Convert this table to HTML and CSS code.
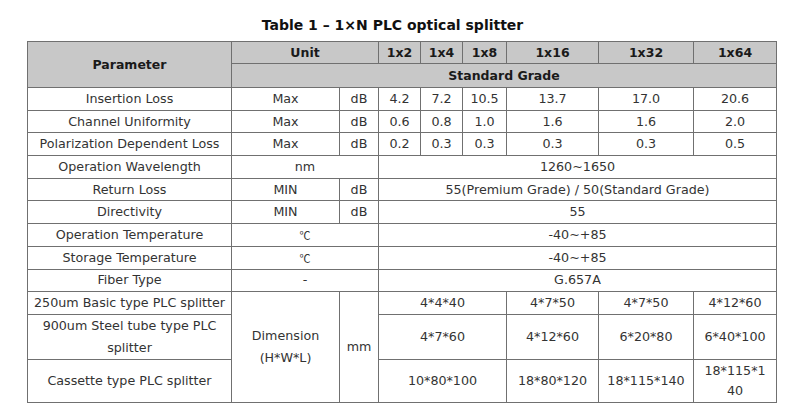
FILE: index.html
```html
<!DOCTYPE html>
<html>
<head>
<meta charset="utf-8">
<link rel="stylesheet" href="styles.css">
</head>
<body>
<div class="page">
  <h1 class="title">Table 1 – 1×N PLC optical splitter</h1>
  <table class="spec">
    <colgroup>
      <col class="c-param">
      <col class="c-unit">
      <col class="c-db">
      <col class="c-x2">
      <col class="c-x4">
      <col class="c-x8">
      <col class="c-x16">
      <col class="c-x32">
      <col class="c-x64">
    </colgroup>
    <tr class="hrow1">
      <th rowspan="2">Parameter</th>
      <th colspan="2">Unit</th>
      <th>1x2</th><th>1x4</th><th>1x8</th><th>1x16</th><th>1x32</th><th>1x64</th>
    </tr>
    <tr class="hrow2">
      <th colspan="8">Standard Grade</th>
    </tr>
    <tr class="r">
      <td>Insertion Loss</td><td>Max</td><td>dB</td>
      <td>4.2</td><td>7.2</td><td>10.5</td><td>13.7</td><td>17.0</td><td>20.6</td>
    </tr>
    <tr class="r">
      <td>Channel Uniformity</td><td>Max</td><td>dB</td>
      <td>0.6</td><td>0.8</td><td>1.0</td><td>1.6</td><td>1.6</td><td>2.0</td>
    </tr>
    <tr class="r">
      <td>Polarization Dependent Loss</td><td>Max</td><td>dB</td>
      <td>0.2</td><td>0.3</td><td>0.3</td><td>0.3</td><td>0.3</td><td>0.5</td>
    </tr>
    <tr class="r">
      <td>Operation Wavelength</td><td colspan="2">nm</td>
      <td colspan="6">1260~1650</td>
    </tr>
    <tr class="r">
      <td>Return Loss</td><td>MIN</td><td>dB</td>
      <td colspan="6">55(Premium Grade) / 50(Standard Grade)</td>
    </tr>
    <tr class="r">
      <td>Directivity</td><td>MIN</td><td>dB</td>
      <td colspan="6">55</td>
    </tr>
    <tr class="r">
      <td>Operation Temperature</td><td colspan="2" class="deg">℃</td>
      <td colspan="6">-40~+85</td>
    </tr>
    <tr class="r">
      <td>Storage Temperature</td><td colspan="2" class="deg">℃</td>
      <td colspan="6">-40~+85</td>
    </tr>
    <tr class="r">
      <td>Fiber Type</td><td colspan="2">-</td>
      <td colspan="6">G.657A</td>
    </tr>
    <tr class="r">
      <td>250um Basic type PLC splitter</td>
      <td rowspan="3" class="multi">Dimension<br>(H*W*L)</td>
      <td rowspan="3">mm</td>
      <td colspan="3">4*4*40</td><td>4*7*50</td><td>4*7*50</td><td>4*12*60</td>
    </tr>
    <tr class="r2">
      <td class="multi">900um Steel tube type PLC splitter</td>
      <td colspan="3">4*7*60</td><td>4*12*60</td><td>6*20*80</td><td>6*40*100</td>
    </tr>
    <tr class="r3">
      <td>Cassette type PLC splitter</td>
      <td colspan="3">10*80*100</td><td>18*80*120</td><td>18*115*140</td><td class="multi tight">18*115*1<br>40</td>
    </tr>
  </table>
</div>
</body>
</html>
```

FILE: styles.css
```css
html, body {
  margin: 0;
  padding: 0;
  background: #ffffff;
}

.page {
  padding: 16px 0 0 27px;
  font-family: "DejaVu Sans", Verdana, sans-serif;
  color: #333333;
}

.title {
  margin: 0;
  width: 731px;
  text-align: center;
  font-size: 14px;
  font-weight: bold;
  line-height: 18px;
  height: 25px;
  color: #111;
}

.spec {
  border-collapse: collapse;
  table-layout: fixed;
  width: 749px;
  font-size: 12.7px;
}

.c-param { width: 204px; }
.c-unit { width: 108px; }
.c-db { width: 39px; }
.c-x2 { width: 42px; }
.c-x4 { width: 42px; }
.c-x8 { width: 44px; }
.c-x16 { width: 92px; }
.c-x32 { width: 95px; }
.c-x64 { width: 83px; }

.spec th,
.spec td {
  border: 1.5px solid #707070;
  padding: 0 1px;
  text-align: center;
  vertical-align: middle;
  line-height: 18px;
  white-space: nowrap;
}

.spec th {
  background: #c8c8c8;
  font-weight: bold;
  font-size: 12.5px;
  color: #1a1a1a;
}

.hrow1 th { height: 21px; }
.hrow2 th { height: 23px; }

.r td { height: 21.7px; }
.r2 td { height: 43.5px; }
.r3 td { height: 42.5px; }

.spec td.multi {
  white-space: normal;
  line-height: 22px;
}

.spec td.tight {
  line-height: 20.5px;
}

.deg { font-family: "Noto Sans CJK SC", "DejaVu Sans", sans-serif; font-size: 11px; }
```
